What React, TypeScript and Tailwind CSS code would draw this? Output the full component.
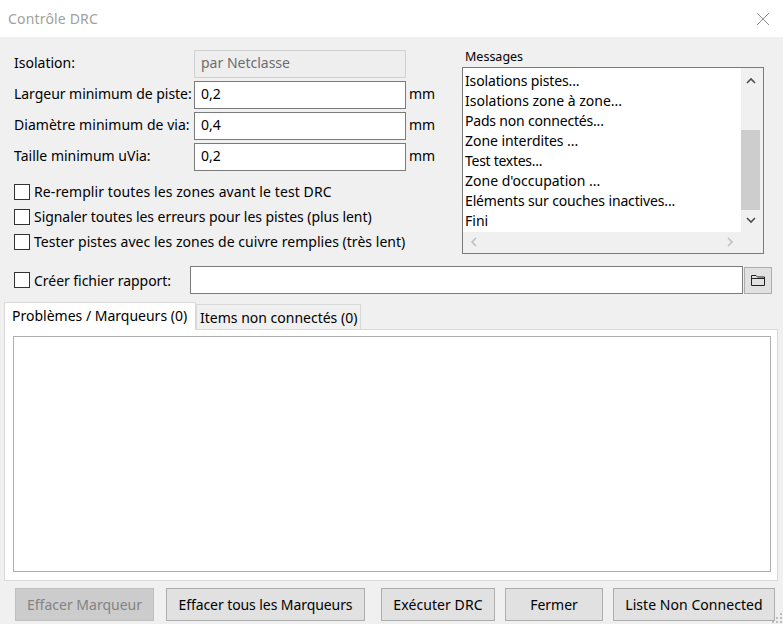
import React from "react";

function Field({ label, value, disabled, labelClass = "" }: { label: string; value: string; disabled?: boolean; labelClass?: string }) {
  return (
    <div className="flex h-[28px] items-center">
      <div className={`-mt-[2px] w-[180px] whitespace-nowrap text-[14px] leading-[20px] text-black ${labelClass}`}>{label}</div>
      {disabled ? (
        <div className="flex h-[28px] w-[212px] items-center border border-[#cfcfcf] bg-[#eeeeee] pb-[3px] pl-[6px] text-[14px] text-[#6d6d6d]">{value}</div>
      ) : (
        <div className="flex h-[28px] w-[212px] items-center border border-[#7a7a7a] bg-white pb-[3px] pl-[6px] text-[14px] text-black">{value}</div>
      )}
      {!disabled && <div className="-mt-[4px] ml-[3px] text-[14px] text-black">mm</div>}
    </div>
  );
}

function Box() {
  return <span className="block h-[16px] w-[16px] shrink-0 border border-[#333333] bg-white" />;
}

function Check({ label, labelClass = "" }: { label: string; labelClass?: string }) {
  return (
    <div className="flex h-[25px] items-center">
      <Box />
      <span className={`ml-[4px] whitespace-nowrap text-[14px] leading-[20px] text-black ${labelClass}`}>{label}</span>
    </div>
  );
}

function Btn({ label, w, disabled, labelClass = "" }: { label: string; w: string; disabled?: boolean; labelClass?: string }) {
  return (
    <div
      className={`flex h-[33px] items-center justify-center border text-[14px] ${w} ${labelClass} ${
        disabled ? "border-[#bfbfbf] bg-[#cccccc] text-[#838383]" : "border-[#adadad] bg-[#e1e1e1] text-black"
      }`}
    >
      {label}
    </div>
  );
}

const messages = [
  { t: "Isolations pistes...", c: "tracking-[-0.15px]" },
  { t: "Isolations zone à zone...", c: "" },
  { t: "Pads non connectés...", c: "tracking-[-0.19px]" },
  { t: "Zone interdites ...", c: "tracking-[-0.05px]" },
  { t: "Test textes...", c: "tracking-[-0.28px]" },
  { t: "Zone d'occupation ...", c: "" },
  { t: "Eléments sur couches inactives...", c: "tracking-[-0.15px]" },
  { t: "Fini", c: "" },
];

export default function App() {
  return (
    <div className="relative flex h-[624px] w-[783px] flex-col overflow-hidden bg-[#f0f0f0] font-['Noto_Sans','Open_Sans',sans-serif]">
      <div className="flex h-[37px] shrink-0 items-center justify-between bg-white pl-[8px] pr-[13px]">
        <span className="-mt-[1px] text-[14px] tracking-[0.17px] text-[#a0a0a0]">Contrôle DRC</span>
        <svg width="14" height="14" viewBox="0 0 14 14">
          <path d="M1 1 L13 13 M13 1 L1 13" stroke="#8f8f8f" strokeWidth="1" fill="none" />
        </svg>
      </div>

      <div className="flex h-[229px] shrink-0 pl-[14px]">
        <div className="w-[448px] pt-[13px]">
          <div className="flex flex-col gap-[3px]">
            <Field label="Isolation:" value="par Netclasse" disabled />
            <Field label="Largeur minimum de piste:" value="0,2" labelClass="tracking-[-0.04px]" />
            <Field label="Diamètre minimum de via:" value="0,4" labelClass="tracking-[0.04px]" />
            <Field label="Taille minimum uVia:" value="0,2" />
          </div>
          <div className="mt-[8px] flex flex-col">
            <Check label="Re-remplir toutes les zones avant le test DRC" labelClass="tracking-[0.09px]" />
            <Check label="Signaler toutes les erreurs pour les pistes (plus lent)" labelClass="tracking-[-0.055px]" />
            <Check label="Tester pistes avec les zones de cuivre remplies (très lent)" labelClass="tracking-[0.035px]" />
          </div>
        </div>

        <div className="w-[301px] pt-[11px]">
          <div className="ml-[3px] h-[19px] text-[12.5px] leading-[17px] text-black">Messages</div>
          <div className="flex h-[187px] w-[302px] flex-col border border-[#7a7a7a] bg-[#f0f0f0]">
            <div className="flex h-[164px] shrink-0">
              <div className="w-[278px] bg-white pl-[2px] pt-[3px] text-[14px] leading-[20px] text-black">
                {messages.map((m) => (
                  <div key={m.t} className={`h-[20px] whitespace-nowrap ${m.c}`}>{m.t}</div>
                ))}
              </div>
              <div className="flex w-[19px] flex-col items-center">
                <svg width="10" height="8" viewBox="0 0 10 8" className="mt-[9px]">
                  <path d="M1 6 L5 2 L9 6" stroke="#4d4d4d" strokeWidth="1.6" fill="none" />
                </svg>
                <div className="mt-[45px] h-[80px] w-full bg-[#cdcdcd]" />
                <svg width="10" height="8" viewBox="0 0 10 8" className="mt-[6px]">
                  <path d="M1 2 L5 6 L9 2" stroke="#4d4d4d" strokeWidth="1.6" fill="none" />
                </svg>
              </div>
            </div>
            <div className="flex h-[20px] items-center justify-between pl-[7px] pr-[29px]">
              <svg width="8" height="10" viewBox="0 0 8 10">
                <path d="M6 1 L2 5 L6 9" stroke="#c0c0c0" strokeWidth="1.6" fill="none" />
              </svg>
              <svg width="8" height="10" viewBox="0 0 8 10">
                <path d="M2 1 L6 5 L2 9" stroke="#c0c0c0" strokeWidth="1.6" fill="none" />
              </svg>
            </div>
          </div>
        </div>
      </div>

      <div className="flex h-[28px] shrink-0 items-center pl-[14px]">
        <Box />
        <span className="ml-[4px] w-[156px] text-[14px] tracking-[-0.04px] text-black">Créer fichier rapport:</span>
        <div className="h-[28px] w-[553px] border border-[#7a7a7a] bg-white" />
        <div className="ml-[1px] flex h-[27px] w-[28px] items-center justify-center border border-[#adadad] bg-[#e1e1e1]">
          <svg width="16" height="14" viewBox="0 0 16 14">
            <path d="M1.5 12.5 V2.5 H6 L7.5 4 H14.5 V12.5 Z M1.5 5.5 H14.5" stroke="#222222" strokeWidth="1" fill="none" />
          </svg>
        </div>
      </div>

      <div className="mt-[8px] flex h-[27px] shrink-0 items-end pl-[4px]">
        <div className="relative z-10 mb-[-1px] flex h-[28px] w-[192px] items-center border border-b-0 border-[#d9d9d9] bg-white pb-[2px] pl-[7px] text-[14px] text-black">
          Problèmes / Marqueurs (0)
        </div>
        <div className="flex h-[25px] w-[165px] items-center border border-b-0 border-[#d9d9d9] bg-[#f0f0f0] pl-[3px] text-[14px] text-black">
          Items non connectés (0)
        </div>
      </div>

      <div className="ml-[4px] h-[252px] w-[774px] shrink-0 border border-[#d9d9d9] bg-white pl-[8px] pt-[6px]">
        <div className="h-[236px] w-[758px] border border-[#adadad] bg-white" />
      </div>

      <div className="mt-[7px] flex pl-[15px]">
        <Btn label="Effacer Marqueur" w="w-[139px]" disabled />
        <div className="ml-[12px]"><Btn label="Effacer tous les Marqueurs" w="w-[199px]" labelClass="tracking-[-0.08px]" /></div>
        <div className="ml-[16px]"><Btn label="Exécuter DRC" w="w-[114px]" labelClass="tracking-[0.08px]" /></div>
        <div className="ml-[10px]"><Btn label="Fermer" w="w-[98px]" /></div>
        <div className="ml-[10px]"><Btn label="Liste Non Connected" w="w-[162px]" labelClass="tracking-[0.05px]" /></div>
      </div>

      <svg width="12" height="12" viewBox="0 0 12 12" className="absolute bottom-0 right-0">
        <g fill="#bdbdbd">
          <rect x="9" y="1" width="2" height="2" />
          <rect x="5" y="5" width="2" height="2" />
          <rect x="9" y="5" width="2" height="2" />
          <rect x="1" y="9" width="2" height="2" />
          <rect x="5" y="9" width="2" height="2" />
          <rect x="9" y="9" width="2" height="2" />
        </g>
      </svg>
    </div>
  );
}
